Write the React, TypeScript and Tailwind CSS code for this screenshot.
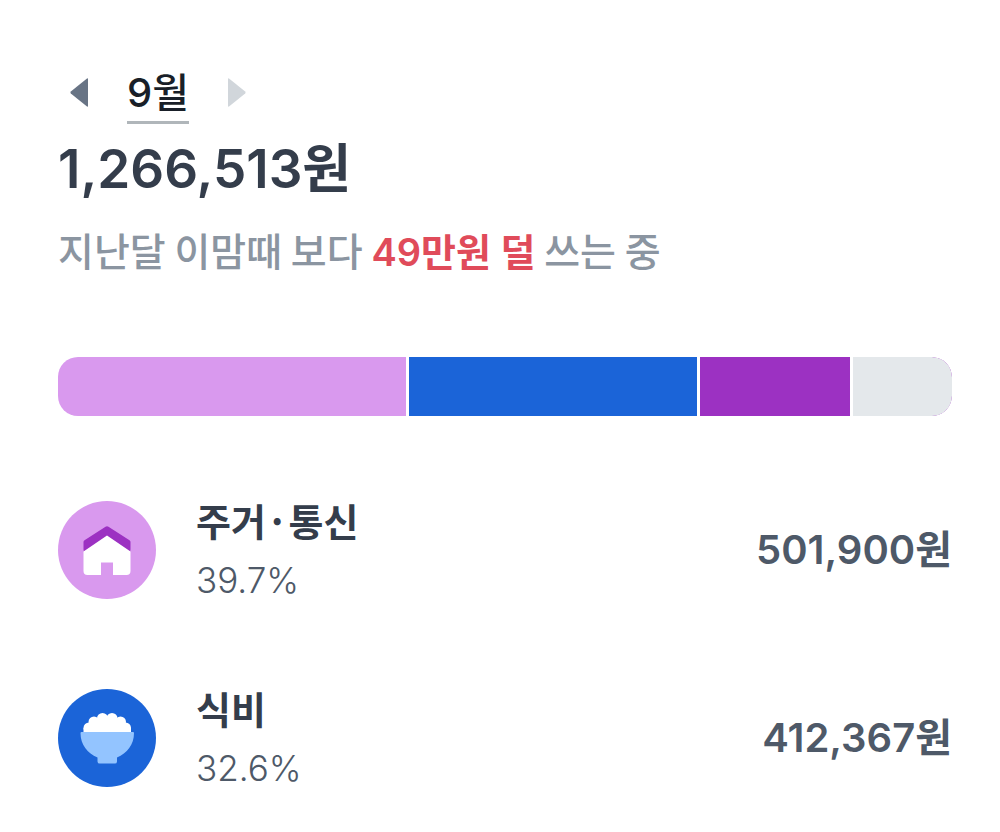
import type { ReactNode } from "react";

type Category = {
    name: string;
    percent: string;
    amount: string;
    color: string;
    icon: ReactNode;
};


// House icon
function HouseIcon() {
    return (
        <svg viewBox="0 0 98 98" className="size-full" aria-hidden="true">
            <path d="M25.500 49 L49 33 L72.500 49 V70 Q72.500 74 68.500 74 H55 V61.500 H43 V74 H29.500 Q25.500 74 25.500 70 Z" fill="#ffffff" />
            <path d="M25.500 41 Q25.500 40 26.500 39.300 L47.500 25.700 Q49 24.700 50.500 25.700 L71.500 39.300 Q72.500 40 72.500 41 V50.500 L49 34.500 L25.500 50.500 Z" fill="#9c31c2" />
        </svg>
    )
}


// Rice bowl icon
function RiceIcon() {
    return (
        <svg viewBox="0 0 98 98" className="size-full" aria-hidden="true">
            <g fill="#ffffff">
                <circle cx="44.500" cy="29.500" r="5.500" />
                <circle cx="54" cy="29.500" r="5.500" />
                <circle cx="36" cy="33" r="5.500" />
                <circle cx="62.500" cy="33" r="5.500" />
                <circle cx="31" cy="39" r="5.500" />
                <circle cx="67.500" cy="39" r="5.500" />
                <path d="M25.500 43 V39 L36 31 H62.500 L73 39 V43 Z" />
            </g>
            <path d="M23.500 43 H75 Q76 43 76 44 C76 56 69 64 59 68.500 V72.500 Q59 74.500 57 74.500 H41.500 Q39.500 74.500 39.500 72.500 V68.500 C29.500 64 22.500 56 22.500 44 Q22.500 43 23.500 43 Z" fill="#93c4ff" />
        </svg>
    )
}


const segments = [
    { color: "bg-[#d999ee]", size: 348 },
    { color: "bg-[#1b64d8]", size: 289 },
    { color: "bg-[#9c31c2]", size: 150 },
]

const categories: Category[] = [
    { name: "주거·통신", percent: "39.7%", amount: "501,900원", color: "bg-[#d999ee]", icon: <HouseIcon /> },
    { name: "식비", percent: "32.6%", amount: "412,367원", color: "bg-[#1b64d8]", icon: <RiceIcon /> },
]


export default function App() {

    return (

        <main className="bg-white pt-16 pb-9 pl-[58px] pr-12 font-['Inter','Noto_Sans_CJK_KR',sans-serif] text-[#343d4b]">

            {/* Month Picker */}
            <div className="flex items-center h-[60px] pl-3 gap-[39px]">

                <button type="button" aria-label="이전 달" className="w-[18px] pb-1">
                    <svg viewBox="0 0 18 29" className="w-full" aria-hidden="true">
                        <path d="M17 0.500 Q18 0 18 1 V28 Q18 29 17 28.500 L0.800 15.500 Q0 14.500 0.800 13.500 Z" fill="#687485" />
                    </svg>
                </button>

                <button type="button" className="border-b-[3px] border-[#b0b6ba] h-[60px] text-[40px] leading-[57px] font-medium text-[#191f28]">9월</button>

                <button type="button" aria-label="다음 달" className="w-[18px] pb-1">
                    <svg viewBox="0 0 18 29" className="w-full" aria-hidden="true">
                        <path d="M1 0.500 Q0 0 0 1 V28 Q0 29 1 28.500 L17.200 15.500 Q18 14.500 17.200 13.500 Z" fill="#d1d6db" />
                    </svg>
                </button>

            </div>


            {/* Total */}
            <h1 className="mt-2 text-[53px] leading-[74px] font-semibold">1,266,513원</h1>

            <p className="mt-[13px] font-['Noto_Sans_CJK_KR',sans-serif] text-[39px] leading-[60px] font-medium text-[#8b95a1]">
                지난달 이맘때 보다 <strong className="font-['Inter','Noto_Sans_CJK_KR',sans-serif] text-[38px] font-semibold text-[#e04b5a]">49만원 덜</strong> 쓰는 중
            </p>


            {/* Spending Bar */}
            <div className="mt-[75px] flex h-[59px] gap-[3px] overflow-hidden rounded-[20px]">
                {segments.map((segment) => (
                    <div key={segment.color} className={`basis-0 ${segment.color}`} style={{ flexGrow: segment.size }}></div>
                ))}
                <div className="basis-0 grow-[99] rounded-r-[20px] bg-[#9c31c2]">
                    <div className="h-full rounded-r-[20px] bg-[#e4e8eb]"></div>
                </div>
            </div>


            {/* Categories */}
            <ul className="mt-[74px] flex flex-col gap-[68px]">
                {categories.map((category) => (
                    <li key={category.name} className="flex items-center gap-10">

                        <div className={`size-[98px] shrink-0 rounded-full ${category.color}`}>{category.icon}</div>

                        <div className="grow leading-[60px]">
                            <h2 className="font-['Noto_Sans_CJK_KR',sans-serif] text-[38px] font-semibold">{category.name}</h2>
                            <p className="text-[35px] font-light text-[#4e5968]">{category.percent}</p>
                        </div>

                        <p className="text-[40px] leading-[60px] font-semibold text-[#4e5968]">{category.amount}</p>

                    </li>
                ))}
            </ul>

        </main>

    )

}
